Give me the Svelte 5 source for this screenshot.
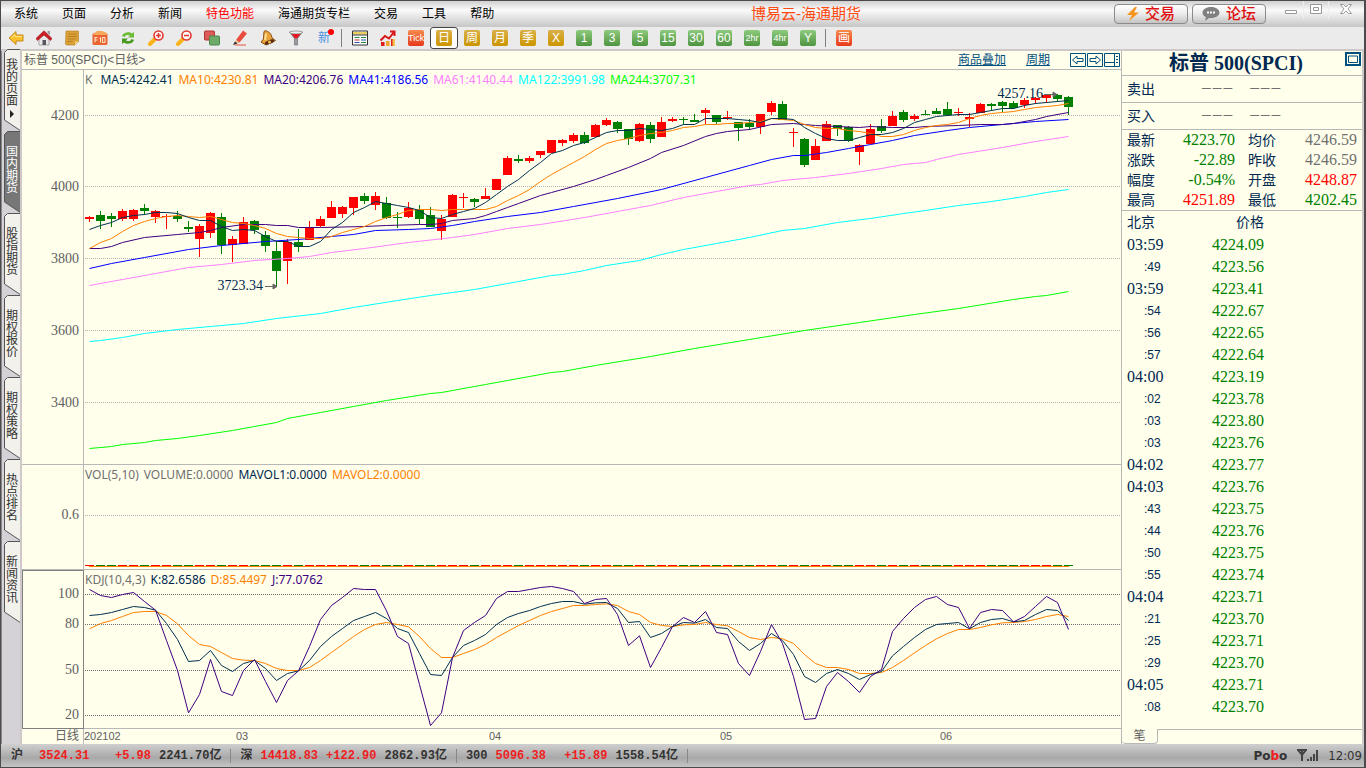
<script lang="ts">
    type Candle = [string, number, number, number, number];
    type Point = [number, number];

    const menus = ["系统", "页面", "分析", "新闻", "特色功能", "海通期货专栏", "交易", "工具", "帮助"];
    const tools = ["back", "home", "note", "f10", "refresh", "zoomin", "zoomout", "overlay", "pencil", "bell", "filter", "new"];
    const periods = ["日", "周", "月", "季", "X", "1", "3", "5", "15", "30", "60", "2hr", "4hr", "Y"];
    const tabs = ["我的页面", "国内期货", "股指期货", "期权报价", "期权策略", "热点排名", "新闻资讯"];

    const STEP = 11;
    const PLOT_WIDTH = 1037;
    const K_HEIGHT = 394;

    // direction, high, body top, body bottom, low
    const candles: Candle[] = [
        ["r", 146, 147, 149, 152], ["g", 141, 145, 151, 159], ["g", 143, 146, 149, 157], ["r", 139, 141, 149, 151],
        ["r", 139, 140, 149, 151], ["g", 134, 138, 141, 145], ["r", 140, 141, 147, 153], ["r", 144, 146, 147, 159],
        ["g", 141, 146, 149, 152], ["g", 151, 157, 159, 162], ["r", 154, 156, 169, 187], ["r", 142, 143, 163, 168],
        ["g", 143, 147, 175, 184], ["r", 166, 169, 175, 192], ["r", 147, 152, 174, 174], ["g", 150, 151, 160, 164],
        ["g", 161, 165, 176, 182], ["g", 171, 181, 201, 217], ["r", 169, 172, 191, 214], ["g", 159, 172, 177, 182],
        ["r", 151, 157, 170, 170], ["r", 146, 149, 156, 157], ["r", 131, 137, 148, 148], ["r", 136, 137, 144, 148],
        ["r", 127, 127, 138, 145], ["g", 123, 126, 131, 134], ["r", 122, 126, 135, 140], ["g", 127, 133, 148, 149],
        ["g", 142, 147, 148, 158], ["r", 132, 138, 147, 148], ["g", 135, 140, 149, 154], ["g", 137, 145, 157, 157],
        ["r", 145, 149, 161, 170], ["r", 124, 125, 147, 147], ["r", 123, 127, 128, 138], ["g", 128, 129, 132, 137],
        ["r", 118, 126, 129, 129], ["r", 109, 109, 120, 120], ["r", 86, 88, 105, 105], ["g", 85, 89, 91, 93],
        ["r", 86, 88, 91, 93], ["r", 81, 81, 85, 88], ["r", 70, 70, 83, 83], ["r", 69, 70, 73, 76],
        ["r", 63, 65, 71, 73], ["g", 62, 65, 73, 74], ["r", 54, 55, 67, 67], ["r", 48, 50, 55, 56],
        ["g", 51, 52, 59, 63], ["g", 59, 59, 69, 75], ["r", 53, 54, 71, 72], ["g", 52, 55, 69, 73],
        ["r", 47, 52, 67, 67], ["r", 47, 49, 51, 52], ["g", 47, 49, 50, 55], ["g", 44, 50, 52, 52],
        ["r", 38, 40, 43, 54], ["g", 45, 45, 52, 54], ["r", 41, 47, 48, 50], ["g", 52, 52, 58, 71],
        ["g", 49, 53, 57, 60], ["r", 44, 44, 57, 64], ["r", 31, 33, 42, 45], ["g", 31, 34, 50, 50],
        ["r", 58, 62, 63, 77], ["g", 68, 69, 95, 97], ["r", 69, 76, 90, 90], ["r", 51, 54, 71, 71],
        ["g", 55, 55, 59, 66], ["g", 56, 57, 71, 72], ["r", 74, 75, 82, 95], ["r", 54, 59, 74, 74],
        ["g", 49, 56, 61, 63], ["r", 41, 46, 56, 56], ["g", 40, 42, 50, 52], ["r", 44, 46, 49, 51],
        ["g", 40, 44, 45, 45], ["g", 38, 41, 44, 44], ["g", 32, 39, 45, 46], ["r", 38, 42, 43, 46],
        ["r", 43, 47, 49, 57], ["r", 33, 34, 43, 43], ["g", 33, 34, 36, 41], ["g", 31, 32, 36, 42],
        ["g", 31, 33, 38, 39], ["r", 28, 30, 35, 38], ["r", 27, 28, 30, 34], ["r", 25, 25, 28, 33],
        ["g", 24, 25, 29, 32], ["g", 26, 27, 37, 45]
    ];

    const ma5 = [159, 155, 152, 147, 145, 144, 142, 142, 143, 147, 150, 150, 156, 160, 159, 160, 166, 171, 171, 176, 176, 171, 159, 152, 142, 137, 131, 133, 135, 137, 140, 147, 148, 144, 141, 138, 132, 124, 116, 109, 100, 92, 83, 80, 75, 72, 67, 62, 60, 60, 58, 59, 60, 58, 54, 54, 48, 48, 48, 49, 50, 52, 48, 48, 49, 57, 63, 68, 70, 70, 67, 64, 64, 62, 58, 52, 49, 46, 45, 44, 44, 42, 40, 38, 38, 35, 33, 32, 31, 30];
    const ma10 = [178, 172, 168, 161, 155, 151, 148, 146, 145, 146, 147, 146, 149, 152, 153, 155, 158, 163, 166, 167, 168, 168, 166, 162, 159, 156, 151, 147, 144, 140, 139, 139, 140, 139, 139, 139, 139, 136, 130, 125, 119, 111, 104, 98, 92, 86, 79, 73, 70, 68, 65, 63, 62, 60, 57, 56, 54, 54, 53, 53, 52, 51, 48, 49, 50, 54, 57, 58, 58, 60, 61, 63, 66, 66, 64, 60, 57, 55, 54, 52, 48, 45, 43, 42, 41, 39, 37, 36, 35, 33];
    const ma20: Point[] = [[0, 178], [1, 178], [2, 176], [3, 172], [5, 167], [8, 164], [10, 162], [11, 160], [12, 157], [14, 154], [16, 154], [17, 155], [18, 155], [19, 157], [21, 157], [25, 156], [27, 155], [30, 154], [31, 154], [32, 153], [33, 150], [35, 148], [36, 145], [37, 141], [38, 137], [39, 133], [41, 125], [42, 122], [44, 116], [46, 109], [47, 105], [49, 97], [51, 88], [52, 82], [54, 75], [56, 66], [57, 63], [58, 61], [60, 59], [62, 54], [64, 53], [66, 55], [68, 56], [70, 57], [71, 56], [73, 57], [75, 57], [76, 56], [79, 55], [81, 54], [83, 54], [84, 53], [86, 49], [87, 46], [89, 42]];
    const ma41: Point[] = [[0, 198], [2, 193], [5, 187], [9, 179], [12, 175], [16, 171], [19, 169], [22, 166], [24, 164], [26, 160], [29, 159], [31, 158], [33, 155], [35, 151], [38, 146], [41, 142], [44, 136], [48, 128], [52, 119], [56, 107], [60, 95], [62, 89], [64, 85], [65, 85], [67, 82], [69, 78], [71, 74], [73, 70], [75, 65], [78, 60], [80, 57], [83, 54], [86, 51], [89, 49]];
    const ma61: Point[] = [[0, 215], [3, 209], [6, 203], [9, 197], [12, 194], [15, 190], [18, 188], [20, 186], [22, 182], [25, 178], [27, 175], [29, 172], [33, 167], [35, 164], [38, 158], [41, 154], [45, 147], [48, 141], [50, 137], [51, 135], [54, 127], [57, 121], [60, 115], [61, 114], [63, 110], [66, 107], [69, 103], [72, 98], [74, 94], [76, 92], [77, 89], [79, 84], [83, 77], [86, 71], [89, 66]];
    const ma122: Point[] = [[0, 271], [1, 270], [3, 267], [5, 263], [8, 259], [11, 256], [14, 253], [17, 248], [21, 243], [24, 237], [28, 230], [31, 225], [33, 222], [35, 219], [38, 213], [39, 211], [42, 205], [43, 204], [45, 200], [47, 195], [50, 190], [52, 184], [54, 179], [57, 173], [60, 167], [63, 160], [65, 158], [68, 152], [71, 148], [74, 143], [76, 140], [79, 135], [82, 131], [85, 126], [87, 122], [89, 119]];
    const ma244: Point[] = [[0, 378], [2, 376], [3, 374], [5, 372], [6, 370], [8, 368], [10, 365], [13, 360], [15, 356], [17, 352], [18, 348], [21, 342], [24, 336], [27, 330], [31, 323], [32, 322], [35, 316], [36, 314], [38, 310], [40, 306], [42, 302], [43, 301], [46, 295], [51, 286], [55, 278], [60, 269], [65, 260], [70, 252], [75, 244], [79, 238], [84, 229], [86, 226], [87, 225], [89, 221]];

    const kLine = [166, 163, 157, 148, 139, 142, 150, 190, 238, 304, 301, 271, 316, 334, 310, 301, 325, 361, 340, 332, 301, 259, 229, 205, 181, 169, 157, 175, 205, 217, 280, 343, 346, 292, 256, 241, 223, 193, 172, 160, 151, 139, 130, 124, 124, 132, 128, 127, 145, 187, 184, 232, 220, 199, 187, 189, 178, 202, 205, 244, 271, 250, 220, 241, 283, 349, 367, 340, 328, 340, 358, 343, 334, 287, 259, 232, 208, 193, 190, 187, 206, 187, 178, 175, 185, 181, 163, 148, 151, 181];
    const dLine = [206, 190, 181, 169, 157, 154, 154, 166, 191, 226, 253, 259, 277, 295, 300, 301, 310, 325, 331, 331, 322, 301, 277, 253, 229, 208, 193, 187, 193, 200, 229, 265, 292, 292, 280, 268, 253, 232, 214, 196, 181, 166, 154, 145, 136, 136, 133, 131, 136, 154, 163, 187, 196, 199, 194, 193, 187, 193, 197, 214, 232, 238, 232, 236, 250, 283, 310, 322, 322, 328, 340, 340, 337, 322, 301, 278, 256, 236, 220, 208, 208, 202, 194, 188, 187, 184, 178, 169, 163, 169];
    const jLine = [88, 106, 112, 103, 97, 124, 150, 241, 331, 458, 403, 298, 394, 406, 331, 298, 364, 427, 361, 332, 259, 178, 136, 112, 85, 88, 88, 152, 229, 250, 373, 496, 458, 292, 211, 187, 166, 115, 94, 94, 88, 82, 79, 85, 94, 130, 118, 115, 163, 256, 227, 322, 262, 199, 172, 187, 154, 217, 223, 310, 346, 274, 193, 250, 349, 478, 475, 379, 337, 364, 397, 349, 328, 214, 175, 142, 118, 109, 133, 142, 205, 157, 148, 151, 185, 169, 139, 109, 127, 208];

    const indexed = (values: number[]): Point[] => values.map((v, i) => [i, v]);
    const path = (points: Point[], shift = 0.5) => points.map(([i, y]) => `${i * STEP + 5.5},${y + shift}`).join(" ");

    const kLines = [
        { name: "MA61", value: "4140.44", color: "#ff80ff", points: ma61 },
        { name: "MA122", value: "3991.98", color: "#00ffff", points: ma122 },
        { name: "MA244", value: "3707.31", color: "#00ff00", points: ma244 },
        { name: "MA41", value: "4186.56", color: "#0000ff", points: ma41 },
        { name: "MA20", value: "4206.76", color: "#400080", points: ma20 },
        { name: "MA10", value: "4230.81", color: "#ff8000", points: indexed(ma10) },
        { name: "MA5", value: "4242.41", color: "#003050", points: indexed(ma5) }
    ];
    const legendOrder = ["MA5", "MA10", "MA20", "MA41", "MA61", "MA122", "MA244"];
    const legend = legendOrder.map(name => kLines.find(line => line.name === name)!);

    const priceGrid = [["4200", 45], ["4000", 116], ["3800", 188], ["3600", 260], ["3400", 332]] as [string, number][];
    const kdjGrid = [["100", 103], ["80", 193], ["50", 331], ["20", 466]] as [string, number][];
    const months = [["03", 158], ["04", 411], ["05", 642], ["06", 862]] as [string, number][];

    const quotes = [
        ["最新", "4223.70", "down", "均价", "4246.59", "flat"],
        ["涨跌", "-22.89", "down", "昨收", "4246.59", "flat"],
        ["幅度", "-0.54%", "down", "开盘", "4248.87", "up"],
        ["最高", "4251.89", "up", "最低", "4202.45", "down"]
    ];

    const ticks = [
        ["03:59", "4224.09"], [":49", "4223.56"], ["03:59", "4223.41"], [":54", "4222.67"], [":56", "4222.65"],
        [":57", "4222.64"], ["04:00", "4223.19"], [":02", "4223.78"], [":03", "4223.80"], [":03", "4223.76"],
        ["04:02", "4223.77"], ["04:03", "4223.76"], [":43", "4223.75"], [":44", "4223.76"], [":50", "4223.75"],
        [":55", "4223.74"], ["04:04", "4223.71"], [":21", "4223.70"], [":25", "4223.71"], [":29", "4223.70"],
        ["04:05", "4223.71"], [":08", "4223.70"]
    ];

    const indices = [
        ["沪", "3524.31", "+5.98", "2241.70亿"],
        ["深", "14418.83", "+122.90", "2862.93亿"],
        ["300", "5096.38", "+15.89", "1558.54亿"]
    ];

    let period = "日";
    let tab = "国内期货";
</script>

{#snippet icon(name: string)}
    <svg class="icon" viewBox="0 0 16 16" aria-hidden="true">
        {#if name === "back"}
            <path d="M1 8 8 1.5V5h7v6H8v3.500z" fill="#fbc02d" stroke="#c48a1a" />
            <path d="M3 8l4-3.500V6.500h7" fill="none" stroke="#ffe680" />
        {:else if name === "home"}
            <path d="M3 8v7h10V8L8 4z" fill="#e8e8ea" stroke="#9a9aa0" stroke-width=".8" />
            <path d="M11.500 1h2.500v4l-2.500-2z" fill="#999" />
            <path d="M0 8.500 8 .8l8 7.700-1.500 2L8 5 1.500 10.500z" fill="#cf1d24" stroke="#8e1015" stroke-width=".6" />
            <path d="M6.500 10h3.500v5H6.500z" fill="#55565e" />
        {:else if name === "note"}
            <path d="M2 1h12.500v10.500L11 15H3Q1 15 1.500 12z" fill="#dba136" stroke="#b57c1c" stroke-width=".6" />
            <path d="M4 4h9M4 6.500h9M3.500 9h8M3.500 11.500h5" stroke="#b98125" />
            <path d="M14.500 11.500H11V15z" fill="#f6d68a" />
        {:else if name === "f10"}
            <rect x=".5" y="3" width="15" height="12" rx="1.500" fill="#ec6333" />
            <path d="M1 4l4-3h5l5 2v2H1z" fill="#f5a85b" />
            <path d="M2.500 7.500h3M3 7.500v5M3 10h2.500M7.500 8.500l1-1v5M10.500 7.500h2.500v5h-2.500z" fill="none" stroke="#ffe9c8" />
        {:else if name === "refresh"}
            <path d="M2 6C3.500 1.500 10 1.500 12 3.500l2-1.500v5.500H8L10 5.500C8 4.500 5.500 4.500 4.500 7z" fill="#6cbb35" />
            <path d="M14 10C12.500 14.500 6 14.500 4 12.500L2 14V8.500h6L6 10.500c2 1 4.500 1 5.500-1.500z" fill="#4a9a20" />
        {:else if name === "zoomin" || name === "zoomout"}
            <path d="M2 14 6.500 9.500" stroke="#f9b41c" stroke-width="4" stroke-linecap="round" />
            <circle cx="10.500" cy="5.500" r="4.500" fill="#fff" stroke="#e0392f" stroke-width="1.600" />
            <path d={name === "zoomin" ? "M8 5.500h5M10.500 3v5" : "M8 5.500h5"} stroke="#e0392f" stroke-width="1.600" />
        {:else if name === "overlay"}
            <rect x=".5" y="1" width="10" height="9" rx="1" fill="#dc5a58" stroke="#b03434" />
            <rect x="5.500" y="6" width="10" height="9" rx="1" fill="#6daa6a" stroke="#4a8a4a" />
        {:else if name === "pencil"}
            <path d="M4 10 11 .5 15 3.500 7.500 12.500z" fill="#e94b3c" />
            <path d="M4 10l3.500 2.500-6 2.500z" fill="#eebf8a" />
            <path d="M1 15l2-3.500 2.500 2z" fill="#333" />
            <path d="M3 15h11" stroke="#e4553c" />
        {:else if name === "bell"}
            <path d="M4 1.500C5 .5 6.500.5 7.500 1.500 11 3 11.500 5.500 12 8l3.500 2.500L6 15 1 12l2.500-3z" fill="#e8a43a" stroke="#8a4a14" />
            <ellipse cx="9.500" cy="12" rx="5" ry="2" transform="rotate(-22 9.500 12)" fill="#5b2c12" />
            <circle cx="9.500" cy="12" r="1.500" fill="#f3c14d" />
            <path d="M6 3.500 5 10" stroke="#ffdf96" stroke-width="2" />
        {:else if name === "filter"}
            <path d="M1.500 2h13L9.500 8.500V15h-3V8.500z" fill="#9b9ea3" stroke="#6a6d72" stroke-width=".7" />
            <ellipse cx="8" cy="2.500" rx="6.500" ry="1.500" fill="#e9e9e9" stroke="#777" stroke-width=".6" />
            <path d="M3.500 4h9L9 8.500H7z" fill="#e31b23" />
        {:else if name === "list"}
            <path d="M.5 1h15v14H.5z" fill="#fff" stroke="#333" />
            <path d="M1 2h14v2.500H1z" fill="#e9cf62" />
            <path d="M1 5h14" stroke="#333" />
            <path d="M2.500 7.500h5M9 7.500h5" stroke="#25883a" stroke-width="1.200" />
            <path d="M2.500 10h5" stroke="#c1272d" /><path d="M9 10h5M2.500 12.500h5" stroke="#2450a8" /><path d="M9 12.500h5" stroke="#25883a" />
        {:else if name === "chart"}
            <path d="M1 12h3.500v4H1zM11 9h2v7h-2z" fill="#e01c1c" />
            <path d="M6 11h3.500v5H6z" fill="#f2a22b" /><path d="M12.500 9H15v7h-2.500z" fill="#f3c14d" />
            <path d="M.5 10.500 5 6l4 2.500L14 2M10 1.500h4.500V6" fill="none" stroke="#d81616" stroke-width="2" />
        {/if}
    </svg>
{/snippet}

<div class="app">
    <header class="menubar">
        <nav class="menus">
            {#each menus as menu}
                <button class="menu" class:special={menu === "特色功能"}>{menu}</button>
            {/each}
        </nav>
        <div class="title">博易云-海通期货</div>
        <div class="actions">
            <button class="action">
                <svg width="12" height="14" viewBox="0 0 12 14" aria-hidden="true"><path d="M8 0 0 8h5l-3 6 10-8.500H7L10 0z" fill="#f7941d" /></svg>
                交易
            </button>
            <button class="action">
                <svg width="18" height="14" viewBox="0 0 18 14" aria-hidden="true">
                    <path d="M9 0c5 0 8.500 2.500 8.500 5.500S14 11 9 11l-2 0-4 3 1-4C1.500 9 .5 7.500.5 5.500.5 2.500 4 0 9 0z" fill="#808080" />
                    <path d="M5 5.500h2M8 5.500h2M11 5.500h2" stroke="#fff" stroke-width="2" />
                </svg>
                论坛
            </button>
        </div>
        <div class="window-buttons">
            <button aria-label="最小化"><svg width="12" height="12"><path d="M.5 7.500h11v3H.5z" fill="#fff" stroke="#999" /></svg></button>
            <button aria-label="最大化"><svg width="12" height="12"><path d="M.5 1.500h11v9H.5zM3.500 4.500h5v3h-5z" fill="#fff" stroke="#999" /></svg></button>
            <button aria-label="关闭"><svg width="12" height="12"><path d="M.5 1.500h3L6 4l2.500-2.500h3L8 6l3.500 4.500h-3L6 8l-2.500 2.500h-3L4 6z" fill="#fff" stroke="#999" /></svg></button>
        </div>
    </header>

    <div class="toolbar">
        {#each tools as name}
            <button class="tool" aria-label={name}>
                {#if name === "new"}<span class="new">新</span>{:else}{@render icon(name)}{/if}
            </button>
        {/each}
        <span class="divider"></span>
        <button class="tool" aria-label="list">{@render icon("list")}</button>
        <button class="tool" aria-label="chart">{@render icon("chart")}</button>
        <button class="tool"><span class="chip red small">Tick</span></button>
        {#each periods as name, i}
            <button class="tool" class:selected={period === name} on:click={() => period = name}>
                <span class="chip" class:gold={i < 5} class:small={name.endsWith("hr")}>{name}</span>
            </button>
        {/each}
        <span class="divider"></span>
        <button class="tool"><span class="chip red">画</span></button>
    </div>

    <div class="body">
        <nav class="tabs">
            {#each tabs as name, i}
                <button class="tab" class:active={tab === name} on:click={() => tab = name}>
                    <svg viewBox="0 0 16 82" aria-hidden="true"><path d="M17 .5H3.500L.5 3.500V71L17 82z" /></svg>
                    <span>{name}</span>
                    {#if i === 0}<i></i>{/if}
                </button>
            {/each}
        </nav>

        <main class="chart">
            <div class="chart-head">
                <h2>标普 500(SPCI)&lt;日线&gt;</h2>
                <div class="links">
                    <a href="#overlay">商品叠加</a>
                    <a href="#period">周期</a>
                    <span class="nav-buttons">
                        <button aria-label="左移"><svg width="16" height="14"><path d="M.5.5h15v13H.5zM2.500 7 7 3v2.500h6v3H7V11z" /></svg></button>
                        <button aria-label="右移"><svg width="16" height="14"><path d="M.5.5h15v13H.5zM13.500 7 9 3v2.500H3v3h6V11z" /></svg></button>
                        <button aria-label="布局"><svg width="16" height="14"><path d="M.5.5h15v13H.5zM.5 9.500h10M10.500.5v13M12 3.500h2M12 6.500h2M12 9.500h2" /></svg></button>
                    </span>
                </div>
            </div>

            <div class="axis">
                {#each priceGrid as [label, y]}
                    <span style="top: {(y + 0.5) / K_HEIGHT * 100}%">{label}</span>
                {/each}
            </div>
            <div class="plot">
                <svg viewBox="0 0 {PLOT_WIDTH} {K_HEIGHT}" preserveAspectRatio="none">
                    {#each priceGrid as [, y]}
                        <line class="grid" x1="1" x2={PLOT_WIDTH} y1={y + 0.5} y2={y + 0.5} />
                    {/each}
                    {#each candles as [dir, high, top, bottom, low], i}
                        <g class={dir}>
                            <rect x={i * STEP + 5} y={high} width="1" height={low - high} />
                            <rect x={i * STEP + 1} y={top} width="9" height={bottom - top} />
                        </g>
                    {/each}
                    {#each kLines as line}
                        <polyline points={path(line.points)} stroke={line.color} />
                    {/each}
                    <path class="arrow" d="M181 216.500h11M189 214l4 2.500-4 2.500zM960 24.500h12M969 22l4 2.500-4 2.500z" />
                </svg>
                <div class="legend">
                    <span class="name symbol">K</span>
                    {#each legend as line}
                        <span style="color: {line.color}">{line.name}:{line.value}</span>
                    {/each}
                </div>
                <span class="mark" style="left: {179 / PLOT_WIDTH * 100}%; top: {216 / K_HEIGHT * 100}%">3723.34</span>
                <span class="mark" style="left: {959 / PLOT_WIDTH * 100}%; top: {24 / K_HEIGHT * 100}%">4257.16</span>
            </div>

            <div class="axis">
                <span style="top: {50 / 104 * 100}%">0.6</span>
            </div>
            <div class="plot">
                <svg viewBox="0 0 {PLOT_WIDTH} 104" preserveAspectRatio="none">
                    <line class="grid" x1="1" x2={PLOT_WIDTH} y1="50.500" y2="50.500" />
                    <rect x="5" y="101" width="980" height="1" fill="#ff8000" />
                    {#each candles as [dir], i}
                        <g class={dir}><rect x={i * STEP + 1} y="100" width="9" height="1" /></g>
                    {/each}
                </svg>
                <div class="legend">
                    <span class="name">VOL(5,10)</span>
                    <span class="name">VOLUME:0.0000</span>
                    <span class="navy">MAVOL1:0.0000</span>
                    <span class="orange">MAVOL2:0.0000</span>
                </div>
            </div>

            <div class="axis focused">
                {#each kdjGrid as [label, y]}
                    <span style="top: {(y - 30) / 474 * 100}%">{label}</span>
                {/each}
            </div>
            <div class="plot">
                <svg viewBox="0 30 {PLOT_WIDTH} 474" preserveAspectRatio="none">
                    {#each kdjGrid as [, y]}
                        <line class="grid dark" x1="1" x2={PLOT_WIDTH} y1={y + 0.5} y2={y + 0.5} />
                    {/each}
                    <polyline points={path(indexed(dLine))} stroke="#ff8000" />
                    <polyline points={path(indexed(kLine))} stroke="#003050" />
                    <polyline points={path(indexed(jLine))} stroke="#400080" />
                </svg>
                <div class="legend">
                    <span class="name">KDJ(10,4,3)</span>
                    <span class="navy">K:82.6586</span>
                    <span class="orange">D:85.4497</span>
                    <span class="purple">J:77.0762</span>
                </div>
            </div>

            <div class="date-label">日线</div>
            <div class="dates">
                <span>202102</span>
                {#each months as [label, x]}
                    <span class="month" style="left: {x / PLOT_WIDTH * 100}%">{label}</span>
                {/each}
            </div>
        </main>

        <aside class="side">
            <div class="side-head">
                <h1>标普 500(SPCI)</h1>
                <button aria-label="展开"><svg width="16" height="14"><path d="M1 1h14v12H1z" stroke-width="2" /><path d="M3.500 4h9v6.500h-9z" /></svg></button>
            </div>
            {#each ["卖出", "买入"] as label}
                <div class="depth"><span>{label}</span><span class="dash">−−−</span><span class="dash">−−−</span></div>
            {/each}
            <table class="quotes">
                <tbody>
                    {#each quotes as [name, value, dir, name2, value2, dir2]}
                        <tr>
                            <th>{name}</th>
                            <td class={dir}>{value}</td>
                            <th>{name2}</th>
                            <td class={dir2}>{value2}</td>
                        </tr>
                    {/each}
                </tbody>
            </table>
            <table class="ticks">
                <thead>
                    <tr><th class="time">北京</th><th>价格</th><th></th></tr>
                </thead>
                <tbody>
                    {#each ticks as [time, price]}
                        <tr>
                            <td class="time" class:seconds={time.startsWith(":")}>{time}</td>
                            <td class="down">{price}</td>
                            <td></td>
                        </tr>
                    {/each}
                </tbody>
            </table>
            <div class="side-foot"><button>笔</button><span></span></div>
        </aside>
    </div>

    <footer class="status">
        {#each indices as [name, value, change, amount]}
            <span class="index">
                <b class="label">{name}</b>
                <b class="rise value">{value}</b>
                <b class="rise change">{change}</b>
                <b class="amount">{amount}</b>
            </span>
        {/each}
        <span class="brand">Po<em>b</em>o</span>
        <svg width="22" height="13" viewBox="0 0 22 13" aria-hidden="true">
            <path d="M0 1h10M1 1l4 5 4-5M5 1v11" fill="none" stroke="#444" stroke-width="2" />
            <path d="M10 10h2v2h-2zM13 8h2v4h-2zM16 5h2v7h-2zM19 1h2v11h-2z" fill="#444" />
        </svg>
        <time>12:09</time>
    </footer>
</div>

<style>
    :global(body) {
        background: #fffff0;
    }

    .app {
        --cream: #ffffec;
        --line: #b8b8b8;
        --navy: #002850;
        --mono: "Liberation Mono", "Noto Sans CJK SC", monospace;
        --ui: "Liberation Sans", "Noto Sans CJK SC", sans-serif;
        --figures: "Liberation Serif", "Noto Sans CJK SC", serif;

        box-sizing: border-box;
        min-height: 100vh;
        display: flex;
        flex-direction: column;
        border: 1px solid #4c4a4c;
        border-width: 1px 2px 1px 1px;
        font-family: var(--ui);
        font-size: 12px;
        line-height: 14px;
        color: #606060;
    }

    button {
        padding: 0;
        border: 0;
        background: none;
        font: inherit;
        color: inherit;
        cursor: pointer;
    }

    h1, h2 {
        margin: 0;
        font-weight: normal;
    }

    table {
        border-collapse: collapse;
        table-layout: fixed;
        width: 100%;
    }

    th, td {
        padding: 0;
        font-weight: normal;
    }

    .menubar {
        height: 26px;
        display: flex;
        align-items: center;
        padding-left: 13px;
        background: linear-gradient(#d0d0d0, #fafafa 35%, #c6c6c6);
        color: #000;
    }

    .menus {
        display: flex;
        gap: 24px;
    }

    .special {
        color: #f00;
    }

    .title {
        margin: 0 auto;
        padding-left: 4px;
        font-size: 15px;
        color: #ff4a10;
    }

    .actions {
        display: flex;
        gap: 4px;
    }

    .action {
        width: 74px;
        height: 20px;
        display: flex;
        align-items: center;
        justify-content: center;
        gap: 6px;
        border: 1px solid #8a8a8a;
        border-radius: 4px;
        background: linear-gradient(#fff, #eee 45%, #c4c4c4);
        font-size: 15px;
        font-weight: 500;
        color: #e01010;
    }

    .window-buttons {
        display: flex;
        align-self: flex-start;
        margin-left: 13px;
    }

    .window-buttons button {
        width: 25px;
        height: 18px;
        border-right: 1px solid #eee;
    }

    .window-buttons button:last-child {
        width: 35px;
        border: 0;
    }

    .toolbar {
        height: 22px;
        display: flex;
        align-items: center;
        padding-left: 1px;
        background: #ebebeb;
        border-bottom: 2px solid #cfc8c8;
    }

    .tool {
        box-sizing: border-box;
        width: 28px;
        height: 22px;
        display: flex;
        align-items: center;
        justify-content: center;
    }

    .tool.selected {
        border: 1px solid #444;
        border-radius: 3px;
        background: #fff;
    }

    .icon {
        width: 16px;
        height: 16px;
    }

    .new {
        position: relative;
        color: #4a90e2;
    }

    .new::after {
        content: "";
        position: absolute;
        top: -2px;
        right: -4px;
        width: 6px;
        height: 6px;
        border-radius: 50%;
        background: #f00;
    }

    .divider {
        width: 1px;
        height: 18px;
        margin: 0 4px 0 3px;
        background: #808080;
    }

    .chip {
        width: 16px;
        height: 16px;
        border-radius: 2px;
        background: linear-gradient(#8ccb7c, #4f9440);
        line-height: 16px;
        text-align: center;
        color: #fff;
    }

    .chip.gold {
        background: linear-gradient(#d9b048, #cc9500);
    }

    .chip.red {
        background: linear-gradient(#f68b4c, #e8391c);
    }

    .chip.small {
        font-size: 9px;
    }

    .body {
        flex: 1;
        display: flex;
        background: #d4d2d6;
        border-left: 1px solid #888;
        border-right: 2px solid #cfc8c8;
    }

    .tabs {
        display: flex;
        flex-direction: column;
        padding-left: 2px;
        margin-top: -2px;
        border-right: 2px solid #cfc8c8;
    }

    .tab {
        position: relative;
        width: 16px;
        height: 82px;
        padding-bottom: 4px;
        box-sizing: border-box;
        line-height: 12px;
        display: flex;
        flex-direction: column;
        align-items: center;
        justify-content: center;
        color: #333;
    }

    .tab span {
        position: relative;
        width: 12px;
    }

    .tab svg {
        position: absolute;
        inset: 0;
        fill: #f2f1ec;
        stroke: #555;
    }

    .tab i {
        position: relative;
        margin-top: 3px;
        border: 4px solid transparent;
        border-left-color: #222;
        border-right: 0;
    }

    .tab.active {
        color: #fff;
    }

    .tab.active svg {
        fill: #777;
    }

    .chart {
        flex: 1;
        min-width: 0;
        display: grid;
        grid-template-columns: 62px minmax(0, 1fr);
        grid-template-rows: 19px minmax(200px, 395fr) minmax(60px, 105fr) minmax(90px, 159fr) 15px;
        background: var(--cream);
    }

    .chart-head {
        grid-column: 1 / -1;
        display: flex;
        justify-content: space-between;
        align-items: center;
        padding: 0 1px 0 2px;
        border-bottom: 1px solid var(--line);
    }

    h2 {
        font-size: 12px;
    }

    .links {
        display: flex;
        align-items: center;
        gap: 20px;
        color: #005080;
    }

    .links a {
        color: inherit;
    }

    .nav-buttons {
        display: flex;
        gap: 1px;
    }

    .nav-buttons button, .side-head button {
        height: 14px;
        display: flex;
    }

    .nav-buttons path, .side-head path {
        fill: none;
        stroke: #005080;
    }

    .axis, .plot {
        position: relative;
        border-bottom: 1px solid var(--line);
    }

    .axis {
        border-right: 1px solid var(--line);
        font-family: var(--figures);
        font-size: 14px;
    }

    .axis span {
        position: absolute;
        right: 4px;
        transform: translateY(-50%);
    }

    .axis.focused {
        outline: 1px solid #808080;
        outline-offset: -1px;
    }

    .plot svg {
        position: absolute;
        inset: 0;
        width: 100%;
        height: 100%;
    }

    .plot rect, .grid {
        shape-rendering: crispEdges;
    }

    .grid {
        stroke: #b4b4b4;
        stroke-dasharray: 1 1;
        vector-effect: non-scaling-stroke;
    }

    .grid.dark {
        stroke: #707070;
    }

    .plot polyline {
        fill: none;
        vector-effect: non-scaling-stroke;
    }

    .r {
        fill: #f00;
    }

    .g {
        fill: #008000;
    }

    .arrow {
        fill: #666;
        stroke: #666;
    }

    .legend {
        position: relative;
        display: flex;
        gap: 5px;
        padding: 3px 1px;
        font-family: "Noto Sans", sans-serif;
        white-space: nowrap;
    }

    .symbol {
        margin-right: 3px;
    }

    .name {
        color: #707070;
    }

    .navy {
        color: var(--navy);
    }

    .orange {
        color: #ff8000;
    }

    .purple {
        color: #400080;
    }

    .mark {
        position: absolute;
        transform: translate(-100%, -50%);
        font-family: var(--figures);
        font-size: 14px;
        color: var(--navy);
    }

    .date-label {
        padding-right: 4px;
        text-align: right;
        border-right: 1px solid var(--line);
    }

    .dates {
        position: relative;
        font-size: 11px;
    }

    .month {
        position: absolute;
        transform: translateX(-50%);
    }

    .side {
        width: 240px;
        display: flex;
        flex-direction: column;
        background: var(--cream);
        border-left: 1px solid var(--line);
        color: var(--navy);
        font-size: 14px;
    }

    .side-head {
        position: relative;
        height: 24px;
        border-bottom: 1px solid var(--line);
        text-align: center;
    }

    h1 {
        padding-right: 12px;
        font: bold 20px/24px var(--figures);
    }

    .side-head button {
        position: absolute;
        top: 1px;
        right: 1px;
    }

    .depth {
        height: 26px;
        display: flex;
        align-items: center;
        gap: 16px;
        padding-left: 5px;
        border-bottom: 1px solid var(--line);
    }

    .dash {
        font: 19px/14px var(--figures);
        color: #707070;
    }

    .depth span:nth-child(2) {
        margin-left: 30px;
    }

    .quotes {
        border-bottom: 1px solid var(--line);
    }

    .quotes tr {
        height: 20px;
    }

    .quotes th {
        width: 28px;
        padding-left: 5px;
        text-align: left;
    }

    .quotes th:nth-child(3) {
        padding-left: 13px;
    }

    .quotes td {
        padding-right: 5px;
    }

    td {
        font-family: var(--figures);
        font-size: 16px;
        text-align: right;
    }

    .quotes td:nth-child(2) {
        width: 80px;
        padding: 0;
    }

    .up {
        color: #f00;
    }

    .down {
        color: #008000;
    }

    .flat {
        color: #707070;
    }

    .ticks tr {
        height: 22px;
    }

    .ticks thead tr {
        height: 23px;
    }

    .ticks th {
        text-align: right;
    }

    .ticks th:nth-child(2) {
        width: 97px;
    }

    .ticks .time {
        width: 40px;
        padding-left: 5px;
        text-align: left;
    }

    .ticks .seconds {
        padding-left: 22px;
        width: 23px;
        font-family: var(--ui);
        font-size: 12px;
    }

    .side-foot {
        display: flex;
        margin-top: auto;
    }

    .side-foot button {
        width: 36px;
        height: 15px;
        border: 1px solid var(--line);
        border-width: 0 1px 1px 0;
        border-radius: 0 0 4px 4px;
        font-size: 12px;
        line-height: 12px;
        color: #606060;
    }

    .side-foot span {
        flex: 1;
        border-top: 1px solid var(--line);
    }

    .status {
        height: 23px;
        box-sizing: border-box;
        display: flex;
        align-items: center;
        padding: 0 2px 0 10px;
        background: linear-gradient(#cfcfcf, #a8a8a8 60%, #c4c4c4);
        font-family: var(--mono);
        color: #333;
        white-space: nowrap;
    }

    .index {
        display: flex;
        align-items: center;
        gap: 8px;
        padding-right: 9px;
        margin-right: 9px;
        border-right: 1px solid #888;
    }

    .index:first-child .label {
        margin-right: 8px;
    }

    .value {
        min-width: 54px;
    }

    .change {
        min-width: 50px;
        text-align: right;
    }

    .rise {
        color: #f02020;
    }

    .brand {
        margin: 0 10px 0 auto;
        font: bold 12px "DejaVu Sans", sans-serif;
    }

    .brand em {
        font-style: normal;
        color: #f02020;
    }

    time {
        margin-left: 9px;
        font: 13px "DejaVu Sans Condensed", sans-serif;
    }
</style>
